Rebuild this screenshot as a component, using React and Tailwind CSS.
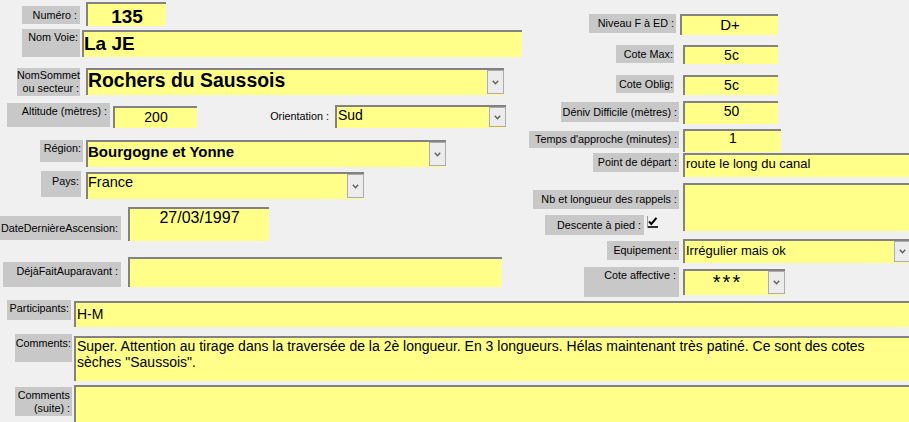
import React from "react";

const Label = ({ className = "", children }) => (
  <div
    className={`shrink-0 whitespace-nowrap bg-[#c8c8c8] text-right text-[10.8px] leading-[13px] text-black ${className}`}
  >
    {children}
  </div>
);

const ComboButton = () => (
  <div className="mb-[1px] flex w-[17px] shrink-0 items-center justify-center border border-[#acacac] bg-[#ececec]">
    <svg width="7" height="5" viewBox="0 0 7 5">
      <polyline
        points="0.8,0.8 3.5,3.8 6.2,0.8"
        fill="none"
        stroke="#5f5f5f"
        strokeWidth="1.4"
      />
    </svg>
  </div>
);

const Field = ({ className = "", textClass = "", combo = false, children }) => (
  <div
    className={`flex shrink-0 border-l-2 border-t-2 border-[#828282] bg-[#ffff8a] ${className}`}
  >
    <div className={`min-w-0 flex-1 overflow-hidden text-black ${textClass}`}>
      {children}
    </div>
    {combo && <ComboButton />}
  </div>
);

const CheckMark = () => (
  <svg width="11" height="12" viewBox="0 0 11 12" className="ml-[3px] mt-[1px]">
    <line x1="0.5" y1="0" x2="0.5" y2="12" stroke="#9a9a9a" strokeWidth="1" />
    <path d="M2 5.5 L4.3 8 L9.5 1.8" fill="none" stroke="#000" strokeWidth="2" />
    <line x1="1" y1="11" x2="11" y2="11" stroke="#000" strokeWidth="1.6" />
  </svg>
);

export default function App() {
  return (
    <div className="h-[422px] w-[909px] overflow-hidden bg-[#f0f0f0] font-['Liberation_Sans',Arial,sans-serif]">
      {/* Top part - two columns */}
      <div className="flex h-[300px]">
        {/* Left column */}
        <div className="w-[522px] shrink-0 pt-[2px]">
          <div className="flex h-[27px]">
            <Label className="ml-[22px] mt-[4px] flex h-[18px] w-[58px] items-center justify-end pr-[3px]">
              Numéro :
            </Label>
            <Field
              className="ml-[6px] h-[24px] w-[80px]"
              textClass="pt-[3px] text-center text-[19px] font-bold leading-[20px]"
            >
              135
            </Field>
          </div>

          <div className="flex h-[39px]">
            <Label className="ml-[22px] h-[28px] w-[58px] pr-[2px] pt-[2px]">
              Nom Voie:
            </Label>
            <Field
              className="ml-[2px] mt-[1px] h-[27px] w-[440px]"
              textClass="pt-[2px] text-[19px] font-bold leading-[20px]"
            >
              La JE
            </Field>
          </div>

          <div className="flex h-[35px]">
            <Label className="ml-[17px] h-[28px] w-[63px] pr-[1px] pt-[1px]">
              NomSommet
              <br />
              ou secteur :
            </Label>
            <Field
              combo
              className="ml-[6px] h-[27px] w-[418px]"
              textClass="text-[19.4px] font-bold leading-[20px]"
            >
              Rochers du Saussois
            </Field>
          </div>

          <div className="flex h-[37px]">
            <Label className="ml-[7px] h-[24px] w-[103px] pr-[3px] pt-[2px]">
              Altitude (mètres) :
            </Label>
            <Field
              className="ml-[3px] mt-[3px] h-[22px] w-[84px]"
              textClass="pt-[1px] text-center text-[14px] leading-[16px]"
            >
              200
            </Field>
            <div className="mt-[7px] w-[132px] shrink-0 text-right text-[10.8px] leading-[13px] text-black">
              Orientation :
            </div>
            <Field
              combo
              className="ml-[6px] mt-[2px] h-[23px] w-[171px]"
              textClass="pl-[1px] text-[14px] leading-[16px]"
            >
              Sud
            </Field>
          </div>

          <div className="flex h-[31px]">
            <Label className="ml-[40px] h-[22px] w-[43px] pr-[2px] pt-[2px]">
              Région:
            </Label>
            <Field
              combo
              className="ml-[3px] h-[27px] w-[360px]"
              textClass="pt-[1px] text-[15px] font-bold leading-[17px]"
            >
              Bourgogne et Yonne
            </Field>
          </div>

          <div className="flex h-[36px]">
            <Label className="ml-[41px] h-[26px] w-[40px] pr-[2px] pt-[4px]">
              Pays:
            </Label>
            <Field
              combo
              className="ml-[5px] mt-[1px] h-[27px] w-[278px]"
              textClass="text-[14.5px] leading-[17px]"
            >
              France
            </Field>
          </div>

          <div className="flex h-[50px]">
            <Label className="mt-[9px] flex h-[24px] w-[121px] items-center justify-end pr-[3px]">
              DateDernièreAscension:
            </Label>
            <Field
              className="ml-[7px] h-[34px] w-[141px]"
              textClass="text-center text-[16px] leading-[18px]"
            >
              27/03/1997
            </Field>
          </div>

          <div className="flex">
            <Label className="ml-[3px] mt-[5px] h-[25px] w-[118px] pr-[3px] pt-[3px]">
              DéjàFaitAuparavant :
            </Label>
            <Field className="ml-[7px] h-[30px] w-[374px]" />
          </div>
        </div>

        {/* Right column */}
        <div className="flex-1 pt-[14px]">
          <div className="flex h-[31px]">
            <div className="flex w-[154px] shrink-0 justify-end">
              <Label className="flex h-[19px] w-[87px] items-center justify-end pr-[2px]">
                Niveau F à ED :
              </Label>
            </div>
            <Field
              className="ml-[4px] h-[21px] w-[98px]"
              textClass="pt-[1px] text-center text-[15px] leading-[15px]"
            >
              D+
            </Field>
          </div>

          <div className="flex h-[30px]">
            <div className="flex w-[152px] shrink-0 justify-end">
              <Label className="flex h-[18px] w-[58px] items-center justify-end pr-[1px]">
                Cote Max:
              </Label>
            </div>
            <Field
              className="ml-[9px] h-[19px] w-[95px]"
              textClass="text-center text-[14px] leading-[16px]"
            >
              5c
            </Field>
          </div>

          <div className="flex h-[26px]">
            <div className="flex w-[152px] shrink-0 justify-end">
              <Label className="flex h-[18px] w-[58px] items-center justify-end pr-[1px]">
                Cote Oblig:
              </Label>
            </div>
            <Field
              className="ml-[9px] h-[20px] w-[95px]"
              textClass="text-center text-[14px] leading-[16px]"
            >
              5c
            </Field>
          </div>

          <div className="flex h-[28px]">
            <div className="flex w-[157px] shrink-0 justify-end">
              <Label className="mt-[1px] flex h-[20px] w-[118px] items-center justify-end pr-[2px]">
                Déniv Difficile (mètres) :
              </Label>
            </div>
            <Field
              className="ml-[4px] h-[23px] w-[95px]"
              textClass="text-center text-[14px] leading-[16px]"
            >
              50
            </Field>
          </div>

          <div className="flex h-[24px]">
            <div className="flex w-[157px] shrink-0 justify-end">
              <Label className="mt-[2px] flex h-[17px] w-[150px] items-center justify-end pr-[2px]">
                Temps d'approche (minutes) :
              </Label>
            </div>
            <Field
              className="ml-[4px] h-[23px] w-[98px]"
              textClass="text-center text-[14px] leading-[15px]"
            >
              1
            </Field>
          </div>

          <div className="flex h-[30px]">
            <div className="flex w-[157px] shrink-0 justify-end">
              <Label className="flex h-[19px] w-[86px] items-center justify-end pr-[2px]">
                Point de départ :
              </Label>
            </div>
            <Field
              className="ml-[4px] h-[24px] w-[226px]"
              textClass="pl-[1px] pt-[1px] text-[13px] leading-[16px]"
            >
              route le long du canal
            </Field>
          </div>

          <div className="flex h-[56px]">
            <div className="w-[157px] shrink-0">
              <div className="mt-[7px] flex justify-end">
                <Label className="flex h-[19px] w-[146px] items-center justify-end pr-[2px]">
                  Nb et longueur des rappels :
                </Label>
              </div>
              <div className="ml-[23px] mt-[6px] flex">
                <Label className="flex h-[20px] w-[99px] items-center justify-end pr-[3px]">
                  Descente à pied :
                </Label>
                <CheckMark />
              </div>
            </div>
            <Field className="ml-[4px] h-[48px] w-[226px]" />
          </div>

          <div className="flex h-[28px]">
            <div className="flex w-[157px] shrink-0 justify-end">
              <Label className="mt-[2px] flex h-[19px] w-[72px] items-center justify-end pr-[2px]">
                Equipement :
              </Label>
            </div>
            <Field
              combo
              className="ml-[4px] h-[24px] w-[228px]"
              textClass="pl-[1px] pt-[2px] text-[13px] leading-[16px]"
            >
              Irrégulier mais ok
            </Field>
          </div>

          <div className="flex">
            <div className="flex w-[157px] shrink-0 justify-end">
              <Label className="h-[30px] w-[95px] pr-[3px] pt-[2px]">
                Cote affective :
              </Label>
            </div>
            <Field
              combo
              className="ml-[4px] mt-[2px] h-[26px] w-[102px]"
              textClass="pl-[2px] text-center text-[20px] leading-[22px] tracking-[2px]"
            >
              ***
            </Field>
          </div>
        </div>
      </div>

      {/* Bottom part - full width rows */}
      <div className="flex h-[34px]">
        <Label className="ml-[7px] h-[20px] w-[64px] pr-[2px] pt-[2px]">
          Participants:
        </Label>
        <Field
          className="ml-[3px] mt-[1px] h-[26px] flex-1"
          textClass="pl-[1px] pt-[3px] text-[14px] leading-[16px]"
        >
          H-M
        </Field>
      </div>

      <div className="flex h-[51px]">
        <Label className="ml-[15px] h-[28px] w-[57px] pr-[1px] pt-[3px]">
          Comments:
        </Label>
        <Field
          className="ml-[2px] mt-[2px] h-[45px] flex-1"
          textClass="pl-[1px] text-[14px] leading-[16px]"
        >
          Super. Attention au tirage dans la traversée de la 2è longueur. En 3
          longueurs. Hélas maintenant très patiné. Ce sont des cotes sèches
          "Saussois".
        </Field>
      </div>

      <div className="flex">
        <Label className="ml-[15px] mt-[2px] h-[29px] w-[57px] pr-[2px] pt-[2px]">
          Comments
          <br />
          (suite) :
        </Label>
        <Field className="ml-[2px] h-[40px] flex-1" />
      </div>
    </div>
  );
}
